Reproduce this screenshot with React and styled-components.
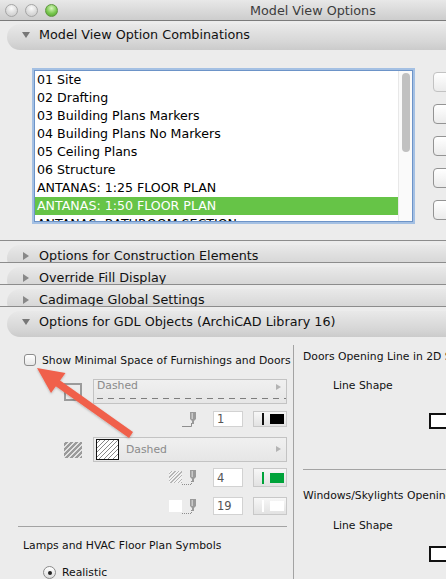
import React from 'react';
import styled, { createGlobalStyle } from 'styled-components';

const GlobalStyle = createGlobalStyle`
  html, body {
    margin: 0;
    padding: 0;
    background: #ececec;
  }
  body {
    font-family: 'DejaVu Sans', 'Liberation Sans', sans-serif;
  }
`;

const Window = styled.div`
  position: relative;
  width: 446px;
  height: 579px;
  overflow: hidden;
  background: #ececec;
  color: #111;
`;

const TitleBar = styled.div`
  display: flex;
  align-items: center;
  height: 20px;
  border-bottom: 1px solid #7b7b7b;
  background: linear-gradient(#e8e8e8, #cdcdcd);
`;

const Lights = styled.div`
  display: flex;
  gap: 7px;
  padding-left: 5px;
`;

const Light = styled.span`
  box-sizing: border-box;
  width: 13px;
  height: 13px;
  border-radius: 50%;
  border: 1px solid ${(p) => (p.$on ? '#5f9640' : '#a5a5a5')};
  background: ${(p) =>
    p.$on
      ? 'radial-gradient(circle at 50% 30%, #d8f6bd, #79c84f 55%, #4e9a2d)'
      : 'radial-gradient(circle at 50% 30%, #fbfbfb, #d9d9d9 60%, #c6c6c6)'};
`;

const Title = styled.div`
  margin-left: 192px;
  font-size: 12.75px;
  color: #3c3c3c;
  white-space: nowrap;
`;

const Triangle = styled.span`
  width: 0;
  height: 0;
  margin: 8px 9px 0 0;
  border-style: solid;
  ${(p) =>
    p.$open
      ? 'border-width: 6px 4px 0 4px; border-color: #777 transparent transparent transparent;'
      : 'border-width: 4px 0 4px 6px; border-color: transparent transparent transparent #888; margin-top: 7px; margin-left: 1px; margin-right: 10px;'}
`;

const Pill = styled.div`
  display: flex;
  align-items: flex-start;
  height: 26px;
  margin: ${(p) => (p.$top ? '3px' : '4px')} 0 0 7px;
  padding-left: 15px;
  border-radius: 13px 0 0 13px;
  background: linear-gradient(#e9e9e9, #d6d6d6 70%, #cbcbcb);
  font-size: 12.75px;
  line-height: 22px;
  color: #111;
  white-space: nowrap;
`;

const FoldRow = styled.div`
  height: ${(p) => (p.$open ? 'auto' : '21px')};
  overflow: ${(p) => (p.$open ? 'visible' : 'hidden')};
  border-top: 1px solid #8c8c8c;
`;

const Combos = styled.div`
  display: flex;
  height: 152px;
  padding: 20px 0 18px;
`;

const ListBox = styled.div`
  box-sizing: border-box;
  display: flex;
  flex: none;
  width: 379px;
  height: 152px;
  margin-left: 34px;
  border: 1px solid #6d94c8;
  box-shadow: 0 0 0 2px #a4c0e3;
  background: #fff;
  overflow: hidden;
`;

const ListRows = styled.div`
  flex: 1;
  overflow: hidden;
`;

const ListItem = styled.div`
  height: 18px;
  padding-left: 2px;
  font-size: 12.6px;
  line-height: 18px;
  white-space: nowrap;
  color: ${(p) => (p.$selected ? '#fff' : '#000')};
  background: ${(p) => (p.$selected ? '#66c447' : 'transparent')};
`;

const ScrollTrack = styled.div`
  width: 13px;
  border-left: 1px solid #e8e8e8;
  background: #fafafa;
`;

const Thumb = styled.div`
  width: 8px;
  height: 79px;
  margin: 2px 0 0 3px;
  border-radius: 4px;
  background: #c1c1c1;
`;

const ButtonColumn = styled.div`
  display: flex;
  flex-direction: column;
  gap: 12px;
  padding: 2px 0 0 20px;
`;

const SideButton = styled.div`
  box-sizing: border-box;
  width: 60px;
  height: 20px;
  border: 1px solid ${(p) => (p.$disabled ? '#c2c2c2' : '#939393')};
  border-radius: 4px;
  background: linear-gradient(#ffffff, #ebebeb);
`;

const GdlBody = styled.div`
  display: flex;
  margin-top: 8px;
`;

const LeftCol = styled.div`
  flex: none;
  width: 293px;
  height: 240px;
  border-right: 1px solid #a3a3a3;
`;

const RightCol = styled.div`
  flex: 1;
  padding-left: 9px;
  white-space: nowrap;
`;

const CheckRow = styled.label`
  display: flex;
  align-items: center;
  gap: 6px;
  height: 14px;
  margin-top: 8px;
  padding-left: 24px;
  font-size: 10.8px;
  white-space: nowrap;
`;

const CheckBox = styled.span`
  box-sizing: border-box;
  width: 12px;
  height: 12px;
  border: 1px solid #8c8c8c;
  border-radius: 3px;
  background: linear-gradient(#ffffff, #e6e6e6);
`;

const ShapeRow = styled.div`
  display: flex;
  align-items: center;
  height: 25px;
  margin-top: ${(p) => p.$gap}px;
  padding-left: 64px;
`;

const OutlineIcon = styled.span`
  box-sizing: border-box;
  width: 18px;
  height: 18px;
  border: 2px solid #9b9b9b;
`;

const HatchIcon = styled.span`
  width: 18px;
  height: 16px;
  background: repeating-linear-gradient(-45deg, #9a9a9a 0 2px, #e2e2e2 2px 3.5px);
`;

const Dropdown = styled.div`
  box-sizing: border-box;
  position: relative;
  display: flex;
  align-items: ${(p) => (p.$swatch ? 'center' : 'flex-start')};
  width: 194px;
  height: 25px;
  margin-left: 11px;
  padding-left: ${(p) => (p.$swatch ? '2px' : '3px')};
  border: 1px solid #c3c3c3;
  background: linear-gradient(#f0f0f0, #e6e6e6);
  font-size: 10.8px;
  line-height: 12px;
  color: #8a8a8a;
`;

const DropArrow = styled.span`
  position: absolute;
  right: 5px;
  top: ${(p) => (p.$mid ? '8px' : '4px')};
  width: 0;
  height: 0;
  border-style: solid;
  border-width: 3px 0 3px 5px;
  border-color: transparent transparent transparent #b3b3b3;
`;

const DashLine = styled.span`
  position: absolute;
  left: 3px;
  right: 0;
  bottom: 4px;
  height: 1px;
  background: repeating-linear-gradient(90deg, #7e7e7e 0 6px, transparent 6px 11px);
`;

const Swatch = styled.span`
  box-sizing: border-box;
  width: 23px;
  height: 21px;
  margin-right: 7px;
  border: 1px solid #111;
  background: repeating-linear-gradient(-45deg, #888 0 0.7px, #fff 0.7px 3.2px);
`;

const PenRow = styled.div`
  display: flex;
  align-items: center;
  justify-content: flex-end;
  height: ${(p) => p.$h}px;
  margin-top: ${(p) => p.$gap}px;
  padding-right: 6px;
`;

const PenGroup = styled.span`
  display: flex;
  align-items: flex-end;
  height: 15px;
  margin-right: 15px;
`;

const SmallHatch = styled.span`
  width: 13px;
  height: 12px;
  margin-bottom: 2px;
  background: ${(p) =>
    p.$blank ? '#fff' : 'repeating-linear-gradient(-45deg, #b5b5b5 0 1px, #f2f2f2 1px 2.5px)'};
`;

const NumField = styled.span`
  box-sizing: border-box;
  display: flex;
  align-items: center;
  width: 30px;
  height: 100%;
  margin-right: 10px;
  padding-left: 3px;
  border: 1px solid #d2d2d2;
  background: #fff;
  font-size: 11.5px;
  color: #555;
`;

const ColorBox = styled.span`
  box-sizing: border-box;
  display: flex;
  align-items: center;
  width: 34px;
  height: 100%;
  padding-left: 8px;
  border: 1px solid #c8c8c8;
  background: linear-gradient(#f7f7f7, #e2e2e2);
`;

const ColorBar = styled.span`
  width: 2px;
  height: 12px;
  margin-right: 6px;
  background: ${(p) => p.$color};
`;

const ColorChip = styled.span`
  width: 14px;
  height: 10px;
  background: ${(p) => p.$color};
`;

const Rule = styled.div`
  height: 1px;
  margin: ${(p) => p.$gap}px ${(p) => p.$right || 0}px 0 ${(p) => p.$left}px;
  background: #a3a3a3;
`;

const Label = styled.div`
  height: 14px;
  margin-top: ${(p) => p.$gap}px;
  padding-left: ${(p) => p.$indent || 0}px;
  font-size: 10.8px;
  line-height: 14px;
  white-space: nowrap;
`;

const RadioRow = styled.div`
  display: flex;
  align-items: center;
  gap: 6px;
  margin-top: 13px;
  padding-left: 43px;
  font-size: 10.8px;
  line-height: 13px;
`;

const Radio = styled.span`
  box-sizing: border-box;
  display: flex;
  align-items: center;
  justify-content: center;
  width: 13px;
  height: 13px;
  border: 1px solid #8a8a8a;
  border-radius: 50%;
  background: linear-gradient(#ffffff, #dcdcdc);

  &::after {
    content: '';
    width: 4px;
    height: 4px;
    border-radius: 50%;
    background: #222;
  }
`;

const LineShapeBox = styled.div`
  box-sizing: border-box;
  width: 22px;
  height: 16px;
  margin: ${(p) => p.$gap}px 0 0 126px;
  border: 2px solid #111;
  background: #fff;
`;

const ArrowLayer = styled.svg`
  position: absolute;
  left: 0;
  top: 0;
  pointer-events: none;
`;

const listItems = [
  '01 Site',
  '02 Drafting',
  '03 Building Plans Markers',
  '04 Building Plans No Markers',
  '05 Ceiling Plans',
  '06 Structure',
  'ANTANAS: 1:25 FLOOR PLAN',
  'ANTANAS: 1:50 FLOOR PLAN',
  'ANTANAS: BATHROOM SECTION',
];

const folded = ['Options for Construction Elements', 'Override Fill Display', 'Cadimage Global Settings'];

function Pen({ dotted }) {
  return (
    <svg width="16" height="15" viewBox="0 0 16 15">
      <path
        d="M0 14.5 H9.5 V11"
        fill="none"
        stroke="#8e8e8e"
        strokeWidth="1"
        strokeDasharray={dotted ? '1 1' : undefined}
      />
      <path d="M8 0 H14 V7 L12 9 V12 H10 V9 L8 7 Z" fill="#9a9a9a" />
      <rect x="9.5" y="1" width="1.5" height="6" fill="#c9c9c9" />
    </svg>
  );
}

function PenField({ gap, h, icon, value, bar, chip }) {
  return (
    <PenRow $gap={gap} $h={h}>
      <PenGroup>
        {icon}
        <Pen dotted={!!icon} />
      </PenGroup>
      <NumField>{value}</NumField>
      <ColorBox>
        <ColorBar $color={bar} />
        <ColorChip $color={chip} />
      </ColorBox>
    </PenRow>
  );
}

export default function App() {
  return (
    <Window>
      <GlobalStyle />
      <TitleBar>
        <Lights>
          <Light />
          <Light />
          <Light $on />
        </Lights>
        <Title>Model View Options</Title>
      </TitleBar>

      <Pill $top>
        <Triangle $open />
        Model View Option Combinations
      </Pill>

      <Combos>
        <ListBox>
          <ListRows>
            {listItems.map((item) => (
              <ListItem key={item} $selected={item === 'ANTANAS: 1:50 FLOOR PLAN'}>
                {item}
              </ListItem>
            ))}
          </ListRows>
          <ScrollTrack>
            <Thumb />
          </ScrollTrack>
        </ListBox>
        <ButtonColumn>
          <SideButton $disabled />
          <SideButton />
          <SideButton />
          <SideButton />
          <SideButton />
        </ButtonColumn>
      </Combos>

      {folded.map((name) => (
        <FoldRow key={name}>
          <Pill>
            <Triangle />
            {name}
          </Pill>
        </FoldRow>
      ))}
      <FoldRow $open>
        <Pill>
          <Triangle $open />
          Options for GDL Objects (ArchiCAD Library 16)
        </Pill>
      </FoldRow>

      <GdlBody>
        <LeftCol>
          <CheckRow>
            <CheckBox />
            Show Minimal Space of Furnishings and Doors
          </CheckRow>

          <ShapeRow $gap={12}>
            <OutlineIcon />
            <Dropdown>
              Dashed
              <DropArrow />
              <DashLine />
            </Dropdown>
          </ShapeRow>

          <PenField gap={7} h={16} value="1" bar="#111" chip="#000" />

          <ShapeRow $gap={10}>
            <HatchIcon />
            <Dropdown $swatch>
              <Swatch />
              Dashed
              <DropArrow $mid />
            </Dropdown>
          </ShapeRow>

          <PenField gap={6} h={19} icon={<SmallHatch />} value="4" bar="#00a33a" chip="#00a33a" />
          <PenField gap={10} h={18} icon={<SmallHatch $blank />} value="19" bar="#fff" chip="#fff" />

          <Rule $gap={11} $left={18} $right={6} />
          <Label $gap={12} $indent={23}>
            Lamps and HVAC Floor Plan Symbols
          </Label>
          <RadioRow>
            <Radio />
            Realistic
          </RadioRow>
        </LeftCol>

        <RightCol>
          <Label $gap={5}>Doors Opening Line in 2D Symbol</Label>
          <Label $gap={15} $indent={30}>
            Line Shape
          </Label>
          <LineShapeBox $gap={20} />
          <Rule $gap={40} $left={0} />
          <Label $gap={19}>Windows/Skylights Opening Line in 2D Symbol</Label>
          <Label $gap={16} $indent={30}>
            Line Shape
          </Label>
          <LineShapeBox $gap={13} />
        </RightCol>
      </GdlBody>

      <ArrowLayer width="446" height="579" viewBox="0 0 446 579">
        <defs>
          <filter id="arrowShadow" x="-20%" y="-20%" width="140%" height="140%">
            <feDropShadow dx="0" dy="1" stdDeviation="1" floodColor="#000" floodOpacity="0.25" />
          </filter>
        </defs>
        <g fill="#f0604b" filter="url(#arrowShadow)">
          <path d="M133 432 L58 379 L54 385 L129 438 Z" />
          <path d="M37 368 L65.5 373 L51 393 Z" />
        </g>
      </ArrowLayer>
    </Window>
  );
}
